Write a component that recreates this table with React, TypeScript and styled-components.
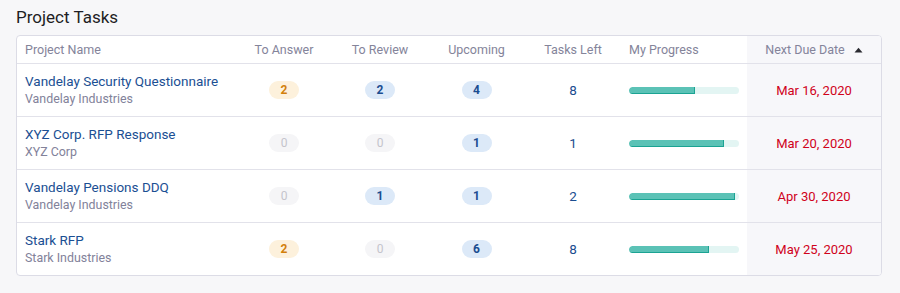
import React from "react";
import styled, { createGlobalStyle } from "styled-components";

const Global = createGlobalStyle`
  html, body { margin: 0; padding: 0; background: #f7f7f9; }
  body { font-family: Roboto, "Liberation Sans", Arial, sans-serif; -webkit-font-smoothing: antialiased; }
`;

const Page = styled.div`
  padding: 7px 18px 0 16px;
`;

const Title = styled.h2`
  margin: 0 0 8px 0;
  font-size: 17px;
  font-weight: 400;
  color: #1e1e24;
  line-height: 20px;
`;

const Card = styled.div`
  background: #fff;
  border: 1px solid #dcdce6;
  border-radius: 4px;
  overflow: hidden;
`;

const COLS = "219px 96px 96px 97px 96px 126px 134px";

const HeaderRow = styled.div`
  display: grid;
  grid-template-columns: ${COLS};
  height: 27px;
  border-bottom: 1px solid #e2e2ea;
`;

const Row = styled.div<{ $last?: boolean }>`
  display: grid;
  grid-template-columns: ${COLS};
  height: 52px;
  border-bottom: ${(p) => (p.$last ? "none" : "1px solid #e2e2ea")};
`;

const HeadCell = styled.div<{ $align?: "left" | "center"; $sorted?: boolean }>`
  display: flex;
  align-items: center;
  justify-content: ${(p) => (p.$align === "left" ? "flex-start" : "center")};
  padding: 0 8px;
  font-size: 12.5px;
  color: #84849a;
  background: ${(p) => (p.$sorted ? "#f7f7fa" : "transparent")};
  gap: 9px;
`;

const Cell = styled.div<{ $align?: "left" | "center"; $sorted?: boolean }>`
  display: flex;
  flex-direction: column;
  justify-content: center;
  align-items: ${(p) => (p.$align === "left" ? "flex-start" : "center")};
  padding: 0 8px;
  background: ${(p) => (p.$sorted ? "#f7f7fa" : "transparent")};
`;

const ProjectName = styled.a`
  font-size: 13.5px;
  color: #1b4f93;
  text-decoration: none;
  line-height: 18px;
`;

const Company = styled.div`
  font-size: 12.4px;
  color: #82829a;
  line-height: 18px;
`;

type Tone = "orange" | "blue" | "gray";

const toneBg: Record<Tone, string> = {
  orange: "#fdf1dc",
  blue: "#dce9f8",
  gray: "#f5f5f7",
};
const toneFg: Record<Tone, string> = {
  orange: "#d27f0c",
  blue: "#1b4d90",
  gray: "#c4c4cc",
};

const Badge = styled.span<{ $tone: Tone }>`
  display: inline-flex;
  align-items: center;
  justify-content: center;
  width: 30px;
  height: 18px;
  border-radius: 9px;
  font-size: 12px;
  font-weight: ${(p) => (p.$tone === "gray" ? 400 : 700)};
  background: ${(p) => toneBg[p.$tone]};
  color: ${(p) => toneFg[p.$tone]};
`;

const Count = styled.span`
  font-size: 13.5px;
  color: #1b4d90;
`;

const Track = styled.div`
  width: 110px;
  height: 7px;
  border-radius: 4px;
  background: #e3f5f3;
  overflow: hidden;
`;

const Fill = styled.div`
  height: 100%;
  background: #5bc2b6;
  border-radius: 4px 0 0 4px;
  box-shadow: inset -1px -1px 0 #1ba393;
`;

const DueDate = styled.span`
  font-size: 13px;
  color: #d0021b;
`;

const SortArrow = () => (
  <svg width="9" height="6" viewBox="0 0 9 6">
    <path d="M0.5 5.5 L4.5 0.8 L8.5 5.5 Z" fill="#2a2a30" />
  </svg>
);

type Task = {
  name: string;
  company: string;
  toAnswer: number;
  toReview: number;
  upcoming: number;
  left: number;
  progress: number;
  due: string;
};

const tasks: Task[] = [
  { name: "Vandelay Security Questionnaire", company: "Vandelay Industries", toAnswer: 2, toReview: 2, upcoming: 4, left: 8, progress: 60, due: "Mar 16, 2020" },
  { name: "XYZ Corp. RFP Response", company: "XYZ Corp", toAnswer: 0, toReview: 0, upcoming: 1, left: 1, progress: 86, due: "Mar 20, 2020" },
  { name: "Vandelay Pensions DDQ", company: "Vandelay Industries", toAnswer: 0, toReview: 1, upcoming: 1, left: 2, progress: 96, due: "Apr 30, 2020" },
  { name: "Stark RFP", company: "Stark Industries", toAnswer: 2, toReview: 0, upcoming: 6, left: 8, progress: 73, due: "May 25, 2020" },
];

const tone = (n: number, active: Tone): Tone => (n === 0 ? "gray" : active);

export default function App() {
  return (
    <>
      <Global />
      <Page>
        <Title>Project Tasks</Title>
        <Card>
          <HeaderRow>
            <HeadCell $align="left">Project Name</HeadCell>
            <HeadCell>To Answer</HeadCell>
            <HeadCell>To Review</HeadCell>
            <HeadCell>Upcoming</HeadCell>
            <HeadCell>Tasks Left</HeadCell>
            <HeadCell $align="left">My Progress</HeadCell>
            <HeadCell $sorted>
              Next Due Date
              <SortArrow />
            </HeadCell>
          </HeaderRow>
          {tasks.map((t, i) => (
            <Row key={t.name} $last={i === tasks.length - 1}>
              <Cell $align="left">
                <ProjectName href="#">{t.name}</ProjectName>
                <Company>{t.company}</Company>
              </Cell>
              <Cell>
                <Badge $tone={tone(t.toAnswer, "orange")}>{t.toAnswer}</Badge>
              </Cell>
              <Cell>
                <Badge $tone={tone(t.toReview, "blue")}>{t.toReview}</Badge>
              </Cell>
              <Cell>
                <Badge $tone={tone(t.upcoming, "blue")}>{t.upcoming}</Badge>
              </Cell>
              <Cell>
                <Count>{t.left}</Count>
              </Cell>
              <Cell $align="left">
                <Track>
                  <Fill style={{ width: `${t.progress}%` }} />
                </Track>
              </Cell>
              <Cell $sorted>
                <DueDate>{t.due}</DueDate>
              </Cell>
            </Row>
          ))}
        </Card>
      </Page>
    </>
  );
}
